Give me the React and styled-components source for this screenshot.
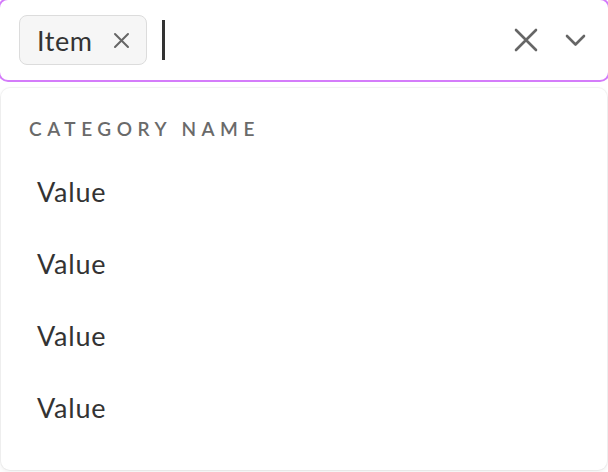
import React from 'react';
import styled, { createGlobalStyle } from 'styled-components';

const GlobalStyle = createGlobalStyle`
  html, body {
    margin: 0;
    padding: 0;
    background: #ffffff;
    overflow: hidden;
  }
  body {
    font-family: Lato, "Noto Sans", "Liberation Sans", sans-serif;
    color: #333333;
  }
`;

const Page = styled.div`
  width: 608px;
  height: 472px;
  display: flex;
  flex-direction: column;
`;

const Control = styled.div`
  display: flex;
  align-items: center;
  box-sizing: border-box;
  height: 84px;
  margin: -2px -2px 0;
  padding: 0 22px 0 19px;
  border: 2px solid #d47cfa;
  border-bottom-width: 2.5px;
  border-radius: 10px;
  background: #ffffff;
`;

const Chip = styled.div`
  display: flex;
  align-items: center;
  box-sizing: border-box;
  height: 50px;
  padding: 0 16px 0 17px;
  gap: 20px;
  border: 1px solid #dcdcdc;
  border-radius: 8px;
  background: #f6f6f6;
  font-size: 27px;
  letter-spacing: 0.6px;
  color: #333333;
`;

const Caret = styled.span`
  width: 3px;
  height: 40px;
  margin-left: 15px;
  background: #333333;
`;

const Spacer = styled.div`
  flex: 1;
`;

const IconButton = styled.span`
  display: flex;
  align-items: center;
  justify-content: center;
  color: #666666;
  margin-left: ${(p) => p.$gap || 0}px;
`;

const Menu = styled.div`
  flex: 1;
  margin: 6px 1px 2px;
  padding: 29px 0 26px;
  border-radius: 9px;
  background: #ffffff;
  box-shadow: 0 0 0 1px rgba(0, 0, 0, 0.04), 0 2px 5px rgba(0, 0, 0, 0.07);
`;

const GroupLabel = styled.div`
  padding-left: 28px;
  margin-bottom: 15px;
  font-size: 19px;
  line-height: 24px;
  font-weight: 600;
  letter-spacing: 5.5px;
  color: #6a6a6a;
  text-transform: uppercase;
`;

const Option = styled.div`
  height: 72px;
  line-height: 72px;
  padding-left: 36px;
  font-size: 27px;
  letter-spacing: 0.8px;
  color: #333333;
`;

const SmallX = () => (
  <svg width="17" height="17" viewBox="0 0 17 17" fill="none" stroke="#666" strokeWidth="2" strokeLinecap="round">
    <path d="M2 2 L15 15 M15 2 L2 15" />
  </svg>
);

const ClearX = () => (
  <svg width="24" height="24" viewBox="0 0 24 24" fill="none" stroke="#666" strokeWidth="2.6" strokeLinecap="round">
    <path d="M2 2 L22 22 M22 2 L2 22" />
  </svg>
);

const Chevron = () => (
  <svg width="21" height="13" viewBox="0 0 21 13" fill="none" stroke="#666" strokeWidth="2.6" strokeLinecap="round" strokeLinejoin="round">
    <path d="M2 2 L10.5 10.5 L19 2" />
  </svg>
);

const values = ['Value', 'Value', 'Value', 'Value'];

export default function App() {
  return (
    <Page>
      <GlobalStyle />
      <Control>
        <Chip>
          Item
          <SmallX />
        </Chip>
        <Caret />
        <Spacer />
        <IconButton>
          <ClearX />
        </IconButton>
        <IconButton $gap={27}>
          <Chevron />
        </IconButton>
      </Control>
      <Menu>
        <GroupLabel>Category name</GroupLabel>
        {values.map((v, i) => (
          <Option key={i}>{v}</Option>
        ))}
      </Menu>
    </Page>
  );
}
